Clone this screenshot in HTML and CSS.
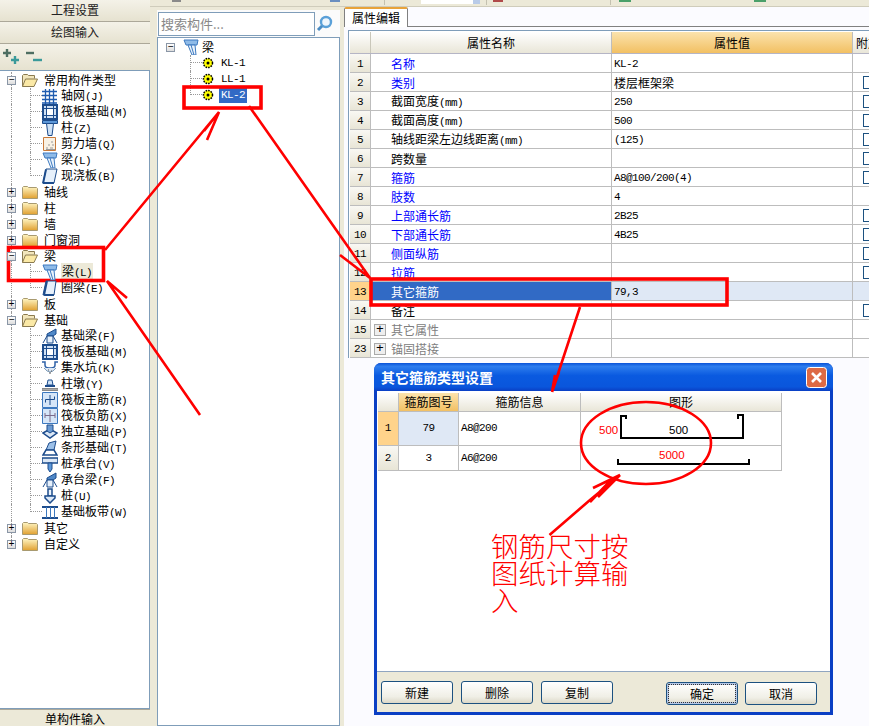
FILE: index.html
```html
<!DOCTYPE html>
<html lang="zh-CN">
<head>
<meta charset="utf-8">
<title>属性编辑</title>
<link rel="stylesheet" href="styles.css">
</head>
<body>
<svg class="defs" width="0" height="0">
  <defs>
    <linearGradient id="fold" x1="0" y1="0" x2="0" y2="1"><stop offset="0" stop-color="#fff6c4"/><stop offset="1" stop-color="#e0a030"/></linearGradient>
    <symbol id="folder" viewBox="0 0 16 14"><path d="M.5 13.500V2.500l1-1h4l1 1h8l1 1v10z" fill="url(#fold)" stroke="#a89a70"/></symbol>
    <symbol id="open" viewBox="0 0 16 14"><path d="M.5 13.500V2.500l1-1h4l1 1h6v3" fill="#f2e6bc" stroke="#8a7a50"/><path d="M.5 13.500l3-7.500h12l-3.500 7.500z" fill="#fbe9a6" stroke="#8a7a50"/></symbol>
    <symbol id="grid" viewBox="0 0 16 16"><path d="M0 3.500h15M0 7.500h15M0 11.500h15M0 15h15M3.500 1v15M7.500 1v15M11.500 1v15" stroke="#1f5cb0" stroke-width="1.300" fill="none"/></symbol>
    <symbol id="raft" viewBox="0 0 16 16"><path d="M1 1h14v14H1z" fill="#cfe0f4" stroke="#1d4c8c" stroke-width="2"/><path d="M4.500 1v14M11.500 1v14M1 4.500h14M1 11.500h14" stroke="#1d4c8c"/><path d="M5 5h6v6H5z" fill="#fff"/></symbol>
    <symbol id="col" viewBox="0 0 16 16"><path d="M.5 .5h15v3H.5z" fill="#5c97d8" stroke="#1d4c8c"/><path d="M4.500 3.500h7l-1.500 12H6z" fill="#cfe2f6" stroke="#1d4c8c"/></symbol>
    <symbol id="wall" viewBox="0 0 16 16"><path d="M1.500 1.500h12v13h-12z" fill="#f8f1e4" stroke="#c87a3a"/><path d="M4 12h2M8 12h3M6 9h2M10 9h2M9 6h2M4 13.500h9" stroke="#999"/></symbol>
    <symbol id="beam" viewBox="0 0 16 16"><path d="M1 1h14l-1 5H3z" fill="#8fbbe8" stroke="#3d79bf"/><path d="M5 6h7l1 10H9z" fill="#eaf3fc" stroke="#3d79bf"/><path d="M8 6l3 10" stroke="#3d79bf"/></symbol>
    <symbol id="slab" viewBox="0 0 16 16"><path d="M4 1h11l-3 14H1z" fill="#e6f0fb" stroke="#1d4c8c"/><path d="M1 15.500l3-14" stroke="#1d4c8c" stroke-width="2"/><path d="M1 15h11" stroke="#1d4c8c" stroke-width="2"/></symbol>
    <symbol id="ring" viewBox="0 0 16 16"><path d="M4 1h10l-2 14H1z" fill="#e6f0fb" stroke="#1d4c8c"/><path d="M2 15l3-14M2 15h10" stroke="#1d4c8c" stroke-width="2"/></symbol>
    <symbol id="fbeam" viewBox="0 0 16 16"><path d="M5 6l9-5v5l-3 2H5z" fill="#4f88c8" stroke="#1d4c8c"/><path d="M5 8h6v7H5zM1 15l4-7M11 8l4 7" fill="#e6f0fb" stroke="#1d4c8c"/></symbol>
    <symbol id="pit" viewBox="0 0 16 16"><path d="M0 2h3v3q0 3 4 3h2q4 0 4-3V2h3" fill="none" stroke="#2f62a8" stroke-width="1.500"/><path d="M2 8q6 8 12 0" fill="#dce8f6" stroke="#7f9db9"/><path d="M6 10h1M9 11h1M7 13h2" stroke="#555"/></symbol>
    <symbol id="pier" viewBox="0 0 16 16"><path d="M6 4h4l1 5H5z" fill="#cfe2f6" stroke="#1d4c8c"/><path d="M3 10h10" stroke="#1d4c8c" stroke-width="2"/><path d="M0 12.500h16v2H0z" fill="#aaa" stroke="#888"/></symbol>
    <symbol id="rebar" viewBox="0 0 16 16"><path d="M.5 .5h15v15H.5z" fill="#d6e6f8" stroke="#3d79bf"/><path d="M8 3v10M3.500 7.500h9M3.500 7.500v3M12.500 7.500v-3" stroke="#1d4c8c" fill="none"/></symbol>
    <symbol id="rebarn" viewBox="0 0 16 16"><path d="M.5 .5h15v15H.5z" fill="#d6e6f8" stroke="#3d79bf"/><path d="M8 2v12M3 7.500h10M3 5v5M13 5v5" stroke="#7a6a8a"/></symbol>
    <symbol id="isol" viewBox="0 0 16 16"><path d="M1 9l7-4 7 4-7 5z" fill="#dce8f6" stroke="#1d4c8c" stroke-width="1.500"/><path d="M5 7V1h6v6l-3 2z" fill="#6a9ad2" stroke="#1d4c8c"/></symbol>
    <symbol id="strip" viewBox="0 0 16 16"><path d="M4 10l3-7 7-2-2 9z" fill="#9cc0e8" stroke="#1d4c8c"/><path d="M1 15l3-5h8l3 5z" fill="#fff" stroke="#1d4c8c" stroke-width="1.500"/></symbol>
    <symbol id="cap" viewBox="0 0 16 16"><path d="M0 2h16v5H0z" fill="#dce8f6" stroke="#1d4c8c" stroke-width="1.500"/><path d="M6 7h4v6l-2 3-2-3z" fill="#5c97d8" stroke="#1d4c8c"/></symbol>
    <symbol id="pile" viewBox="0 0 16 16"><path d="M6 1h4v7H6z" fill="#eaf3fc" stroke="#1d4c8c" stroke-width="1.500"/><path d="M3 8h10v2l-5 5-5-5z" fill="#dce8f6" stroke="#1d4c8c" stroke-width="1.500"/></symbol>
    <symbol id="band" viewBox="0 0 16 16"><path d="M0 3h16M0 14h16" stroke="#1d4c8c" stroke-width="2"/><path d="M4.500 3v11M8.500 3v11M12.500 3v11" stroke="#3d79bf"/></symbol>
    <symbol id="gear" viewBox="0 0 12 12"><circle cx="6" cy="6" r="4.500" fill="#ff0" stroke="#000" stroke-width="1.500" stroke-dasharray="1.600 1"/><circle cx="6" cy="6" r="1.500" fill="#000"/></symbol>
  </defs>
</svg>

<div class="app">
  <aside class="side">
    <div class="side-head">工程设置</div>
    <div class="side-head">绘图输入</div>
    <div class="side-tools">
      <svg width="17" height="16" viewBox="0 0 17 16"><path d="M4 0v8M0 4h8" stroke="#4e6e62" stroke-width="2.400"/><path d="M12 7v8M8 11h8" stroke="#3a9a9a" stroke-width="2.400"/></svg>
      <svg width="17" height="16" viewBox="0 0 17 16"><path d="M0 4h8" stroke="#4e6e62" stroke-width="2.400"/><path d="M7 11h9" stroke="#3a9a9a" stroke-width="2.400"/></svg>
    </div>
    <div class="side-tree">
      <div class="node root"><span class="tog">−</span><svg class="fold"><use href="#open"/></svg>常用构件类型</div>
      <div class="node kid"><svg class="ico"><use href="#grid"/></svg><span>轴网<i>(J)</i></span></div>
      <div class="node kid"><svg class="ico"><use href="#raft"/></svg><span>筏板基础<i>(M)</i></span></div>
      <div class="node kid"><svg class="ico"><use href="#col"/></svg><span>柱<i>(Z)</i></span></div>
      <div class="node kid"><svg class="ico"><use href="#wall"/></svg><span>剪力墙<i>(Q)</i></span></div>
      <div class="node kid"><svg class="ico"><use href="#beam"/></svg><span>梁<i>(L)</i></span></div>
      <div class="node kid end"><svg class="ico"><use href="#slab"/></svg><span>现浇板<i>(B)</i></span></div>
      <div class="node root"><span class="tog">+</span><svg class="fold"><use href="#folder"/></svg>轴线</div>
      <div class="node root"><span class="tog">+</span><svg class="fold"><use href="#folder"/></svg>柱</div>
      <div class="node root"><span class="tog">+</span><svg class="fold"><use href="#folder"/></svg>墙</div>
      <div class="node root"><span class="tog">+</span><svg class="fold"><use href="#folder"/></svg>门窗洞</div>
      <div class="node root"><span class="tog">−</span><svg class="fold"><use href="#open"/></svg>梁</div>
      <div class="node kid"><svg class="ico"><use href="#beam"/></svg><span class="sel">梁<i>(L)</i></span></div>
      <div class="node kid end"><svg class="ico"><use href="#ring"/></svg><span>圈梁<i>(E)</i></span></div>
      <div class="node root"><span class="tog">+</span><svg class="fold"><use href="#folder"/></svg>板</div>
      <div class="node root"><span class="tog">−</span><svg class="fold"><use href="#open"/></svg>基础</div>
      <div class="node kid"><svg class="ico"><use href="#fbeam"/></svg><span>基础梁<i>(F)</i></span></div>
      <div class="node kid"><svg class="ico"><use href="#raft"/></svg><span>筏板基础<i>(M)</i></span></div>
      <div class="node kid"><svg class="ico"><use href="#pit"/></svg><span>集水坑<i>(K)</i></span></div>
      <div class="node kid"><svg class="ico"><use href="#pier"/></svg><span>柱墩<i>(Y)</i></span></div>
      <div class="node kid"><svg class="ico"><use href="#rebar"/></svg><span>筏板主筋<i>(R)</i></span></div>
      <div class="node kid"><svg class="ico"><use href="#rebarn"/></svg><span>筏板负筋<i>(X)</i></span></div>
      <div class="node kid"><svg class="ico"><use href="#isol"/></svg><span>独立基础<i>(P)</i></span></div>
      <div class="node kid"><svg class="ico"><use href="#strip"/></svg><span>条形基础<i>(T)</i></span></div>
      <div class="node kid"><svg class="ico"><use href="#cap"/></svg><span>桩承台<i>(V)</i></span></div>
      <div class="node kid"><svg class="ico"><use href="#fbeam"/></svg><span>承台梁<i>(F)</i></span></div>
      <div class="node kid"><svg class="ico"><use href="#pile"/></svg><span>桩<i>(U)</i></span></div>
      <div class="node kid end"><svg class="ico"><use href="#band"/></svg><span>基础板带<i>(W)</i></span></div>
      <div class="node root"><span class="tog">+</span><svg class="fold"><use href="#folder"/></svg>其它</div>
      <div class="node root tail"><span class="tog">+</span><svg class="fold"><use href="#folder"/></svg>自定义</div>
    </div>
    <div class="side-foot">单构件输入</div>
  </aside>

  <div class="work">
    <div class="topbar">
      <span class="bit t1"></span><span class="bit t2"></span><span class="sep t3"></span>
      <span class="bit t4"></span><span class="sep t5"></span><span class="bit t6"></span>
      <span class="sep t7"></span><span class="bit t8"></span><span class="bit t9"></span>
    </div>
    <div class="panes">
      <section class="list">
        <div class="search">
          <div class="search-box">搜索构件...</div>
          <svg class="search-btn" width="20" height="20" viewBox="0 0 20 20"><circle cx="11" cy="8" r="5" fill="#eef6fd" stroke="#5aa0d8" stroke-width="2.400"/><path d="M7 12l-4 4" stroke="#4a8cc4" stroke-width="3"/></svg>
        </div>
        <div class="list-tree">
          <div class="lnode head"><span class="tog">−</span><svg class="ico"><use href="#beam"/></svg>梁</div>
          <div class="lnode item"><svg class="gear"><use href="#gear"/></svg><i>KL-1</i></div>
          <div class="lnode item"><svg class="gear"><use href="#gear"/></svg><i>LL-1</i></div>
          <div class="lnode item end"><svg class="gear"><use href="#gear"/></svg><i class="cur">KL-2</i></div>
        </div>
      </section>

      <section class="props">
        <div class="tabs"><div class="tab">属性编辑</div></div>
        <div class="grid">
          <div class="row hdr"><div class="n"></div><div class="k c">属性名称</div><div class="v c hot">属性值</div><div class="x">附加</div></div>
          <div class="row"><div class="n">1</div><div class="k b">名称</div><div class="v">KL-2</div><div class="x"></div></div>
          <div class="row"><div class="n">2</div><div class="k b">类别</div><div class="v">楼层框架梁</div><div class="x"><b></b></div></div>
          <div class="row"><div class="n">3</div><div class="k"><span>截面宽度<i>(mm)</i></span></div><div class="v">250</div><div class="x"><b></b></div></div>
          <div class="row"><div class="n">4</div><div class="k"><span>截面高度<i>(mm)</i></span></div><div class="v">500</div><div class="x"><b></b></div></div>
          <div class="row"><div class="n">5</div><div class="k"><span>轴线距梁左边线距离<i>(mm)</i></span></div><div class="v">(125)</div><div class="x"><b></b></div></div>
          <div class="row"><div class="n">6</div><div class="k">跨数量</div><div class="v"></div><div class="x"><b></b></div></div>
          <div class="row"><div class="n">7</div><div class="k b">箍筋</div><div class="v">A8@100/200(4)</div><div class="x"><b></b></div></div>
          <div class="row"><div class="n">8</div><div class="k b">肢数</div><div class="v">4</div><div class="x"></div></div>
          <div class="row"><div class="n">9</div><div class="k b">上部通长筋</div><div class="v">2B25</div><div class="x"><b></b></div></div>
          <div class="row"><div class="n">10</div><div class="k b">下部通长筋</div><div class="v">4B25</div><div class="x"><b></b></div></div>
          <div class="row"><div class="n">11</div><div class="k b">侧面纵筋</div><div class="v"></div><div class="x"><b></b></div></div>
          <div class="row"><div class="n">12</div><div class="k b">拉筋</div><div class="v"></div><div class="x"><b></b></div></div>
          <div class="row on"><div class="n">13</div><div class="k">其它箍筋</div><div class="v">79,3</div><div class="x"></div></div>
          <div class="row"><div class="n">14</div><div class="k">备注</div><div class="v"></div><div class="x"><b></b></div></div>
          <div class="row"><div class="n">15</div><div class="k g"><span class="plus">+</span>其它属性</div><div class="v"></div><div class="x"></div></div>
          <div class="row"><div class="n">23</div><div class="k g"><span class="plus">+</span>锚固搭接</div><div class="v"></div><div class="x"></div></div>
        </div>
      </section>
    </div>
  </div>
</div>

<div class="dialog">
  <div class="dlg-title"><span>其它箍筋类型设置</span>
    <svg class="dlg-close" width="21" height="21" viewBox="0 0 21 21"><rect x=".5" y=".5" width="20" height="20" rx="3" fill="#dd6a45" stroke="#fff"/><path d="M6 6l9 9M15 6l-9 9" stroke="#fff" stroke-width="2.600"/></svg>
  </div>
  <div class="dlg-body">
    <div class="dgrid">
      <div class="drow dh"><div class="d0"></div><div class="d1 hot">箍筋图号</div><div class="d2">箍筋信息</div><div class="d3">图形</div></div>
      <div class="drow r1"><div class="d0 hotn">1</div><div class="d1 pale">79</div><div class="d2 l">A8@200</div>
        <div class="d3 fig">
          <span class="dim-red d-a">500</span><span class="dim-blk d-b">500</span>
          <svg class="shape" width="126" height="28" viewBox="0 0 126 28"><path d="M7 6V3H2v22h122V2h-5v4" fill="none" stroke="#000" stroke-width="2"/></svg>
        </div></div>
      <div class="drow r2"><div class="d0">2</div><div class="d1">3</div><div class="d2 l">A6@200</div>
        <div class="d3 fig">
          <span class="dim-red d-c">5000</span>
          <svg class="shape2" width="133" height="8" viewBox="0 0 133 8"><path d="M1 1v5h131V1" fill="none" stroke="#000" stroke-width="2"/></svg>
        </div></div>
    </div>
    <div class="note">钢筋尺寸按图纸计算输入</div>
  </div>
  <div class="dlg-foot">
    <div class="btn">新建</div><div class="btn">删除</div><div class="btn">复制</div>
    <div class="spacer"></div>
    <div class="btn def">确定</div><div class="btn low">取消</div>
  </div>
</div>

<svg class="marks" width="869" height="726" viewBox="0 0 869 726" fill="none" stroke="#f00">
  <g stroke-width="3.600">
    <rect x="8.500" y="247.500" width="95" height="33"/>
    <rect x="184" y="87" width="77" height="21"/>
    <rect x="371" y="279" width="356" height="26"/>
  </g>
  <g stroke-width="2.600">
    <path d="M105 250L219 112L207 140M219 112L204 131"/>
    <path d="M200 415L107 281L127 298"/>
    <path d="M249 106L370 278L340 255"/>
    <path d="M580 307L552 392M552 392L555 375M552 392L559 372"/>
    <path d="M549.500 535L590 500L620 475L593 488M620 475L598 497M612 479L590 502"/>
    <ellipse cx="646" cy="443" rx="65" ry="41"/>
  </g>
</svg>
</body>
</html>
```
FILE: styles.css
```css
* { box-sizing: border-box; }
html, body { margin: 0; padding: 0; }
body {
  width: 869px;
  height: 726px;
  overflow: hidden;
  position: relative;
  background: #ece9d8;
  color: #000;
  font: 12px/16px "Noto Sans CJK SC", "Liberation Sans", sans-serif;
}
i { font-style: normal; font-family: "Liberation Mono", monospace; font-size: 11px; letter-spacing: -.6px; }
.defs { position: absolute; }

.app { display: flex; height: 726px; }

/* left navigator */
.side { width: 150px; flex: none; display: flex; flex-direction: column; }
.side-head {
  height: 22px;
  border-bottom: 1px solid #aca899;
  background: linear-gradient(#f4f2e8, #e6e2d0);
  color: #222;
  text-align: center;
  line-height: 20px;
}
.side-tools {
  height: 26px;
  display: flex;
  align-items: center;
  gap: 6px;
  padding-left: 3px;
  background: linear-gradient(#f4f2e8, #e6e2d0);
}
.side-tree {
  flex: 1;
  padding-top: 1px;
  background: #fff;
  border: 1px solid #7f9db9;
  border-left: 0;
  min-height: 0;
}
.side-foot { height: 17px; text-align: center; line-height: 17px; background: #ece9d8; border-top: 1px solid #aca899; }

.node { height: 16px; display: flex; align-items: center; position: relative; white-space: nowrap; }
.root { padding-left: 7px; }
.root::before {
  content: "";
  position: absolute;
  left: 11px;
  top: 0;
  bottom: 0;
  border-left: 1px dotted #999;
}
.tail::before { bottom: 8px; }
.tog {
  width: 9px;
  height: 9px;
  flex: none;
  position: relative;
  z-index: 1;
  border: 1px solid #8a96a6;
  background: linear-gradient(#fff, #ddd);
  font: 10px/7px "Liberation Mono", monospace;
  text-align: center;
}
.fold { width: 16px; height: 14px; margin: 0 6px; flex: none; }
.kid { padding-left: 42px; }
.kid::before {
  content: "";
  position: absolute;
  left: 30px;
  top: 0;
  bottom: 0;
  width: 11px;
  border-left: 1px dotted #999;
  background: repeating-linear-gradient(90deg, #999 0 1px, transparent 1px 2px) 0 7px / 100% 1px no-repeat;
}
.kid::after {
  content: "";
  position: absolute;
  left: 11px;
  top: 0;
  bottom: 0;
  border-left: 1px dotted #999;
}
.kid.end::before { bottom: 8px; }
.ico { width: 16px; height: 16px; flex: none; margin-right: 3px; position: relative; z-index: 1; }
.sel { background: #ece9d8; padding: 0 1px; margin-left: 0; }

/* work area */
.work { flex: 1; display: flex; flex-direction: column; min-width: 0; }
.topbar {
  height: 7px;
  flex: none;
  display: flex;
  align-items: flex-start;
  background: #ece9d8;
  border-bottom: 1px solid #cfccbb;
}
.bit { height: 2px; flex: none; }
.sep { width: 1px; height: 5px; flex: none; background: #c4c1b0; }
.t1 { width: 9px; margin-left: 22px; background: #8a8a8a; }
.t2 { width: 10px; margin-left: 149px; background: #6a8ec0; }
.t3 { margin-left: 44px; }
.t4 { width: 59px; margin-left: 36px; height: 4px; background: linear-gradient(90deg, #fff 88%, #b9cbe8 88%); }
.t5 { margin-left: 6px; }
.t6 { width: 10px; margin-left: 6px; background: #b04a4a; }
.t7 { margin-left: 107px; }
.t8 { width: 12px; margin-left: 8px; background: #4aa06a; }
.t9 { width: 12px; margin-left: 123px; background: #4aa06a; }

.panes { flex: 1; display: flex; min-height: 0; padding-left: 7px; }

.list { width: 187px; flex: none; padding-top: 3px; background: #ece9d8; }
.search { display: flex; align-items: center; padding: 2px 0 1px 1px; height: 27px; width: 183px; background: #fbfbfb; }
.search-box {
  width: 157px;
  height: 24px;
  background: #fff;
  border: 1px solid #7f9db9;
  padding-left: 2px;
  color: #888;
  font-size: 13px;
  line-height: 22px;
}
.list-tree {
  height: 689px;
  width: 183px;
  background: #fff;
  border: 1px solid #7f9db9;
  padding-top: 1px;
}
.lnode { height: 16px; display: flex; align-items: center; position: relative; white-space: nowrap; }
.head { padding-left: 8px; }
.head .tog { margin-right: 8px; }
.head .ico { margin-right: 3px; }
.item { padding-left: 44px; }
.item::before {
  content: "";
  position: absolute;
  left: 32px;
  top: 0;
  bottom: 0;
  width: 11px;
  border-left: 1px dotted #999;
  background: repeating-linear-gradient(90deg, #999 0 1px, transparent 1px 2px) 0 7px / 100% 1px no-repeat;
}
.item.end::before { bottom: 8px; }
.gear { width: 12px; height: 12px; margin-right: 7px; flex: none; }
.cur { background: #316ac5; color: #fff; padding: 0 2px; line-height: 15px; margin-left: -2px; }

/* properties */
.props { flex: 1; min-width: 0; background: #fbfbff; }
.tabs { height: 20px; border-bottom: 1px solid #808080; }
.tab {
  width: 64px;
  height: 20px;
  background: #fff;
  border: 1px solid #808080;
  border-top: 2px solid #e8a33a;
  border-bottom: 0;
  border-radius: 2px 2px 0 0;
  text-align: center;
  line-height: 17px;
}
.grid {
  margin: 3px 0 0 4px;
  background: #fff;
  border-left: 1px solid #7f9db9;
  border-top: 1px solid #7f9db9;
  padding: 1px 0 0 1px;
  width: 530px;
}
.row { display: flex; height: 19px; border-bottom: 1px solid #bdbdbd; }
.n {
  width: 21px;
  flex: none;
  text-align: center;
  font-family: "Liberation Mono", monospace;
  font-size: 11px;
  letter-spacing: -.6px;
  line-height: 20px;
  background: linear-gradient(#f9f8f3, #e8e5d6);
  border-right: 1px solid #bdbdbd;
}
.k { width: 241px; flex: none; padding: 2px 0 0 20px; border-right: 1px solid #bdbdbd; white-space: nowrap; display: flex; align-items: center; }
.v { width: 241px; flex: none; padding-left: 2px; line-height: 20px; border-right: 1px solid #bdbdbd; font-family: "Liberation Mono", "Noto Sans CJK SC", monospace; font-size: 11px; letter-spacing: -.6px; }
.row:nth-child(3) .v { font-family: "Noto Sans CJK SC", sans-serif; font-size: 12px; letter-spacing: 0; }
.x { flex: 1; padding-left: 10px; padding-top: 3px; overflow: hidden; white-space: nowrap; }
.x b { display: block; width: 14px; height: 13px; background: #fff; border: 1px solid #1c5180; }
.b { color: #0000ff; }
.g { color: #808080; padding-left: 3px; }
.plus {
  width: 12px;
  height: 12px;
  margin-right: 5px;
  border: 1px solid #aaa;
  background: #eee;
  color: #000;
  text-align: center;
  font: 13px/10px "Liberation Mono", monospace;
}
.hdr { height: 22px; border-bottom-color: #b5b5c5; }
.hdr .n, .hdr .k { background: linear-gradient(#fff, #e9e6d8); }
.hdr .n { border-right-color: #c9c7ba; }
.c { text-align: center; justify-content: center; padding: 0; line-height: 21px; font-family: "Noto Sans CJK SC", sans-serif; font-size: 12px; letter-spacing: 0; }
.hot { background: linear-gradient(#fbe3ad, #f2c063); }
.hdr .x { padding: 0 0 0 3px; line-height: 21px; background: linear-gradient(#fff, #e9e6d8); }
.on .n { background: #ffd38b; }
.on .k { background: #316ac5; color: #fff; }
.on .v { background: #dfe8f5; }
.on .x { background: #dfe8f5; }

/* dialog */
.dialog {
  position: absolute;
  left: 374px;
  top: 363px;
  width: 459px;
  height: 352px;
  display: flex;
  flex-direction: column;
  background: #0a3fc4;
  border-radius: 7px 7px 0 0;
  padding: 0 3px 3px;
}
.dlg-title {
  height: 28px;
  flex: none;
  margin: 0 -3px;
  padding: 0 6px 0 7px;
  display: flex;
  align-items: center;
  justify-content: space-between;
  border-radius: 7px 7px 0 0;
  background: linear-gradient(#0a52d8 0, #2e7dee 12%, #0a5ae0 45%, #0a56dc 85%, #0a3fc4 100%);
  color: #fff;
  font-weight: 700;
  font-size: 14px;
}
.dlg-body { flex: 1; position: relative; background: #fff; padding: 2px 0 0 1px; min-height: 0; border-bottom: 1px solid #8fa5c0; }
.dgrid { width: 404px; }
.drow { display: flex; border-bottom: 1px solid #bdbdbd; }
.drow > div { border-right: 1px solid #bdbdbd; text-align: center; }
.dh { height: 19px; line-height: 18px; background: linear-gradient(#fff, #e9e6d8); }
.r1 { height: 34px; line-height: 33px; }
.r2 { height: 25px; line-height: 24px; }
.d0 { width: 21px; background: linear-gradient(#f9f8f3, #e8e5d6); font-family: "Liberation Mono", monospace; font-size: 11px; }
.d1 { width: 60px; font-family: "Noto Sans CJK SC", sans-serif; }
.r1 .d1, .r2 .d1 { font: 11px/33px "Liberation Mono", monospace; letter-spacing: -.6px; }
.r2 .d1 { line-height: 24px; }
.d2 { width: 122px; }
.drow .d2.l { text-align: left; padding-left: 2px; font-family: "Liberation Mono", monospace; font-size: 11px; letter-spacing: -.6px; }
.d3 { width: 201px; position: relative; }
.dh .d0 { background: none; }
.r1 .hotn { background: #ffd38b; }
.pale { background: #dfe8f5; }
.dim-red, .dim-blk { position: absolute; font: 11.500px/14px "Liberation Sans", sans-serif; }
.dim-red { color: #f00; }
.d-a { left: 18px; top: 11px; }
.d-b { left: 88px; top: 11px; }
.d-c { left: 78px; top: 2px; }
.shape { position: absolute; left: 38px; top: 1px; }
.shape2 { position: absolute; left: 36px; top: 12px; }
.note {
  position: absolute;
  left: 114px;
  top: 141px;
  width: 142px;
  color: #f00;
  font-size: 27.500px;
  font-weight: 300;
  line-height: 27px;
}
.dlg-foot {
  height: 40px;
  flex: none;
  display: flex;
  align-items: flex-start;
  gap: 8px;
  padding: 9px 0 0 4px;
  background: #ece9d8;
}
.btn {
  width: 72px;
  height: 23px;
  flex: none;
  border: 1px solid #1c5180;
  border-radius: 3px;
  background: linear-gradient(#fff, #f0efe6 70%, #dcd8c8);
  text-align: center;
  line-height: 21px;
}
.spacer { width: 37px; flex: none; }
.def { outline: 1px dotted #333; outline-offset: -3px; box-shadow: inset 0 0 0 2px #b6c8e6; margin-top: 1px; }
.low { margin-top: 1px; margin-left: -1px; }

.marks { position: absolute; left: 0; top: 0; pointer-events: none; }
```
